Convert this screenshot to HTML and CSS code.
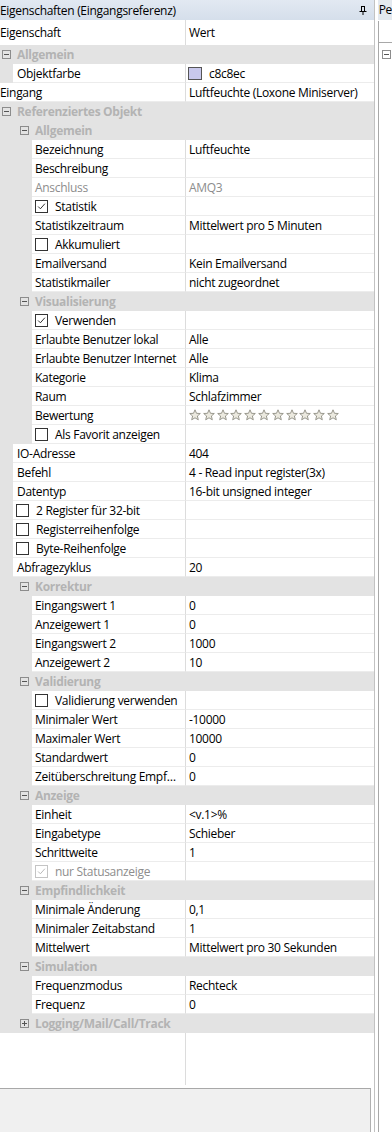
FILE: index.html
```html
<!DOCTYPE html>
<html lang="de">
<head>
  <meta charset="UTF-8">
  <title>Eigenschaften (Eingangsreferenz)</title>
  <link rel="stylesheet" href="styles.css">
</head>
<body>
  <svg width="0" height="0" style="position:absolute">
    <symbol id="star" viewBox="0 0 12 12">
      <path d="M6 0.8 L7.5 4.3 L11.3 4.5 L8.4 7 L9.3 10.8 L6 8.8 L2.7 10.8 L3.6 7 L0.7 4.5 L4.5 4.3 Z" fill="#ebe9df" stroke="#8f8d83" stroke-width="0.9" stroke-linejoin="round"/>
    </symbol>
    <symbol id="minus" viewBox="0 0 9 9">
      <rect x="0.5" y="0.5" width="8" height="8" fill="none" stroke="#8c8c8c"/>
      <path d="M2 4.5 H7" stroke="#555"/>
    </symbol>
    <symbol id="plus" viewBox="0 0 9 9">
      <rect x="0.5" y="0.5" width="8" height="8" fill="none" stroke="#8c8c8c"/>
      <path d="M2 4.5 H7 M4.5 2 V7" stroke="#555"/>
    </symbol>
    <symbol id="tick" viewBox="0 0 13 13">
      <path d="M2.5 6.5 L5.2 9.2 L10.5 3.2" fill="none" stroke="currentColor" stroke-width="1.1"/>
    </symbol>
  </svg>

  <div class="window">
    <!-- Property grid -->
    <div class="props">
      <div class="titlebar">
        <span>Eigenschaften (Eingangsreferenz)</span>
        <svg class="pin" width="8" height="9" viewBox="0 0 8 9"><path d="M2 0.5 H6 M2.5 0.5 V5 M5.5 0.5 V5 M0.5 5.5 H7.5 M4 5.5 V9" stroke="#000" fill="none"/></svg>
      </div>

      <div class="grid">
        <div class="row head"><div class="name">Eigenschaft</div><div class="value">Wert</div></div>

        <div class="row group g0"><svg class="tgl"><use href="#minus"/></svg>Allgemein</div>
        <div class="row l1"><div class="name">Objektfarbe</div><div class="value"><span class="swatch"></span>c8c8ec</div></div>
        <div class="row l0"><div class="name">Eingang</div><div class="value">Luftfeuchte (Loxone Miniserver)</div></div>

        <div class="row group g0"><svg class="tgl"><use href="#minus"/></svg>Referenziertes Objekt</div>
        <div class="row group g1"><svg class="tgl"><use href="#minus"/></svg>Allgemein</div>
        <div class="row l2"><div class="name">Bezeichnung</div><div class="value">Luftfeuchte</div></div>
        <div class="row l2"><div class="name">Beschreibung</div><div class="value"></div></div>
        <div class="row l2 off"><div class="name">Anschluss</div><div class="value">AMQ3</div></div>
        <div class="row l2"><div class="name"><span class="check on"><svg><use href="#tick"/></svg></span>Statistik</div><div class="value"></div></div>
        <div class="row l2"><div class="name">Statistikzeitraum</div><div class="value">Mittelwert pro 5 Minuten</div></div>
        <div class="row l2"><div class="name"><span class="check"></span>Akkumuliert</div><div class="value"></div></div>
        <div class="row l2"><div class="name">Emailversand</div><div class="value">Kein Emailversand</div></div>
        <div class="row l2"><div class="name">Statistikmailer</div><div class="value">nicht zugeordnet</div></div>

        <div class="row group g1"><svg class="tgl"><use href="#minus"/></svg>Visualisierung</div>
        <div class="row l2"><div class="name"><span class="check on"><svg><use href="#tick"/></svg></span>Verwenden</div><div class="value"></div></div>
        <div class="row l2"><div class="name">Erlaubte Benutzer lokal</div><div class="value">Alle</div></div>
        <div class="row l2"><div class="name">Erlaubte Benutzer Internet</div><div class="value">Alle</div></div>
        <div class="row l2"><div class="name">Kategorie</div><div class="value">Klima</div></div>
        <div class="row l2"><div class="name">Raum</div><div class="value">Schlafzimmer</div></div>
        <div class="row l2"><div class="name">Bewertung</div>
          <div class="value stars">
            <svg><use href="#star"/></svg><svg><use href="#star"/></svg><svg><use href="#star"/></svg><svg><use href="#star"/></svg><svg><use href="#star"/></svg><svg><use href="#star"/></svg><svg><use href="#star"/></svg><svg><use href="#star"/></svg><svg><use href="#star"/></svg><svg><use href="#star"/></svg><svg><use href="#star"/></svg>
          </div>
        </div>
        <div class="row l2"><div class="name"><span class="check"></span>Als Favorit anzeigen</div><div class="value"></div></div>

        <div class="row l1"><div class="name">IO-Adresse</div><div class="value">404</div></div>
        <div class="row l1"><div class="name">Befehl</div><div class="value">4 - Read input register(3x)</div></div>
        <div class="row l1"><div class="name">Datentyp</div><div class="value">16-bit unsigned integer</div></div>
        <div class="row l1"><div class="name"><span class="check"></span>2 Register für 32-bit</div><div class="value"></div></div>
        <div class="row l1"><div class="name"><span class="check"></span>Registerreihenfolge</div><div class="value"></div></div>
        <div class="row l1"><div class="name"><span class="check"></span>Byte-Reihenfolge</div><div class="value"></div></div>
        <div class="row l1"><div class="name">Abfragezyklus</div><div class="value">20</div></div>

        <div class="row group g1"><svg class="tgl"><use href="#minus"/></svg>Korrektur</div>
        <div class="row l2"><div class="name">Eingangswert 1</div><div class="value">0</div></div>
        <div class="row l2"><div class="name">Anzeigewert 1</div><div class="value">0</div></div>
        <div class="row l2"><div class="name">Eingangswert 2</div><div class="value">1000</div></div>
        <div class="row l2"><div class="name">Anzeigewert 2</div><div class="value">10</div></div>

        <div class="row group g1"><svg class="tgl"><use href="#minus"/></svg>Validierung</div>
        <div class="row l2"><div class="name"><span class="check"></span>Validierung verwenden</div><div class="value"></div></div>
        <div class="row l2"><div class="name">Minimaler Wert</div><div class="value">-10000</div></div>
        <div class="row l2"><div class="name">Maximaler Wert</div><div class="value">10000</div></div>
        <div class="row l2"><div class="name">Standardwert</div><div class="value">0</div></div>
        <div class="row l2"><div class="name">Zeitüberschreitung Empf…</div><div class="value">0</div></div>

        <div class="row group g1"><svg class="tgl"><use href="#minus"/></svg>Anzeige</div>
        <div class="row l2"><div class="name">Einheit</div><div class="value">&lt;v.1&gt;%</div></div>
        <div class="row l2"><div class="name">Eingabetype</div><div class="value">Schieber</div></div>
        <div class="row l2"><div class="name">Schrittweite</div><div class="value">1</div></div>
        <div class="row l2 off"><div class="name"><span class="check on dim"><svg><use href="#tick"/></svg></span>nur Statusanzeige</div><div class="value"></div></div>

        <div class="row group g1"><svg class="tgl"><use href="#minus"/></svg>Empfindlichkeit</div>
        <div class="row l2"><div class="name">Minimale Änderung</div><div class="value">0,1</div></div>
        <div class="row l2"><div class="name">Minimaler Zeitabstand</div><div class="value">1</div></div>
        <div class="row l2"><div class="name">Mittelwert</div><div class="value">Mittelwert pro 30 Sekunden</div></div>

        <div class="row group g1"><svg class="tgl"><use href="#minus"/></svg>Simulation</div>
        <div class="row l2"><div class="name">Frequenzmodus</div><div class="value">Rechteck</div></div>
        <div class="row l2"><div class="name">Frequenz</div><div class="value">0</div></div>

        <div class="row group g1"><svg class="tgl"><use href="#plus"/></svg>Logging/Mail/Call/Track</div>
        <div class="filler"><div class="name"></div><div class="value"></div></div>
      </div>

      <div class="help"></div>
    </div>

    <!-- Neighbouring panel, cut off -->
    <div class="side">
      <div class="side-title">Pe</div>
      <div class="side-body">
        <div class="side-head"></div>
        <svg class="side-tgl"><use href="#minus"/></svg>
      </div>
    </div>
  </div>
</body>
</html>
```

FILE: styles.css
```css
body { margin: 0; font-family: "Segoe UI", "Open Sans", sans-serif; font-size: 12px; letter-spacing: -0.3px; color: #000; background: #fff; overflow: hidden; }
.window { display: flex; width: 392px; height: 1132px; }

.props { width: 376px; display: flex; flex-direction: column; border-right: 1px solid #c2c2c2; }
.titlebar { height: 20px; flex: none; display: flex; align-items: center; justify-content: space-between; padding-right: 7px; background: linear-gradient(#e2e9f2, #d5dfeb); }
.pin { display: block; }

.grid { flex: 1; display: flex; flex-direction: column; }
.row { display: flex; height: 19px; flex: none; align-items: stretch; background: #e3e3e3; }
.row .name { display: flex; align-items: center; width: 185px; background: #fff; border-bottom: 1px solid #ececec; box-sizing: border-box; white-space: nowrap; overflow: hidden; }
.row .value { display: flex; align-items: center; flex: 1; padding-left: 3px; background: #fff; border-left: 1px solid #dcdcdc; border-bottom: 1px solid #ececec; white-space: nowrap; overflow: hidden; }

.head { height: 25px; }
.head .name, .head .value { border-bottom: none; }

.l0 .name { width: 185px; }
.l1 .name { margin-left: 13px; width: 172px; padding-left: 4px; }
.l2 .name { margin-left: 32px; width: 153px; padding-left: 3px; }
.off { color: #8d8d8d; }

.group { align-items: center; font-weight: bold; color: #b3b3b3; }
.group .tgl { width: 9px; height: 9px; margin-right: 6px; }
.g0 { padding-left: 2px; }
.g1 { padding-left: 20px; }

.check { display: inline-flex; width: 13px; height: 13px; box-sizing: border-box; border: 1px solid #333; margin-right: 7px; background: #fff; color: #222; }
.l1 .check { margin-left: -1px; }
.check svg { width: 11px; height: 11px; }
.check.dim { border-color: #c4c4c4; color: #b4b4b4; }

.swatch { width: 14px; height: 13px; box-sizing: border-box; border: 1px solid #555; background: #c8c8ec; margin: 0 7px 0 -1px; }

.stars { gap: 1.8px; padding-left: 6px; }
.stars svg { width: 12px; height: 12px; }

.filler { flex: 1; display: flex; }
.filler .name { width: 185px; }
.filler .value { flex: 1; border-left: 1px solid #dcdcdc; margin-bottom: 3px; }

.help { height: 43px; flex: none; background: #f0f0f0; border-top: 1px solid #a8a8a8; margin-right: 3px; border-right: 1px solid #b0b0b0; }

.side { flex: 1; display: flex; flex-direction: column; padding-left: 3px; }
.side-title { height: 20px; line-height: 20px; background: #e4e9ef; padding-left: 1px; }
.side-body { flex: 1; border-left: 1px solid #a8a8a8; margin-top: 1px; }
.side-head { height: 21px; border-bottom: 1px solid #a8a8a8; }
.side-tgl { width: 9px; height: 9px; margin: 7px 0 0 3px; display: block; }
```
